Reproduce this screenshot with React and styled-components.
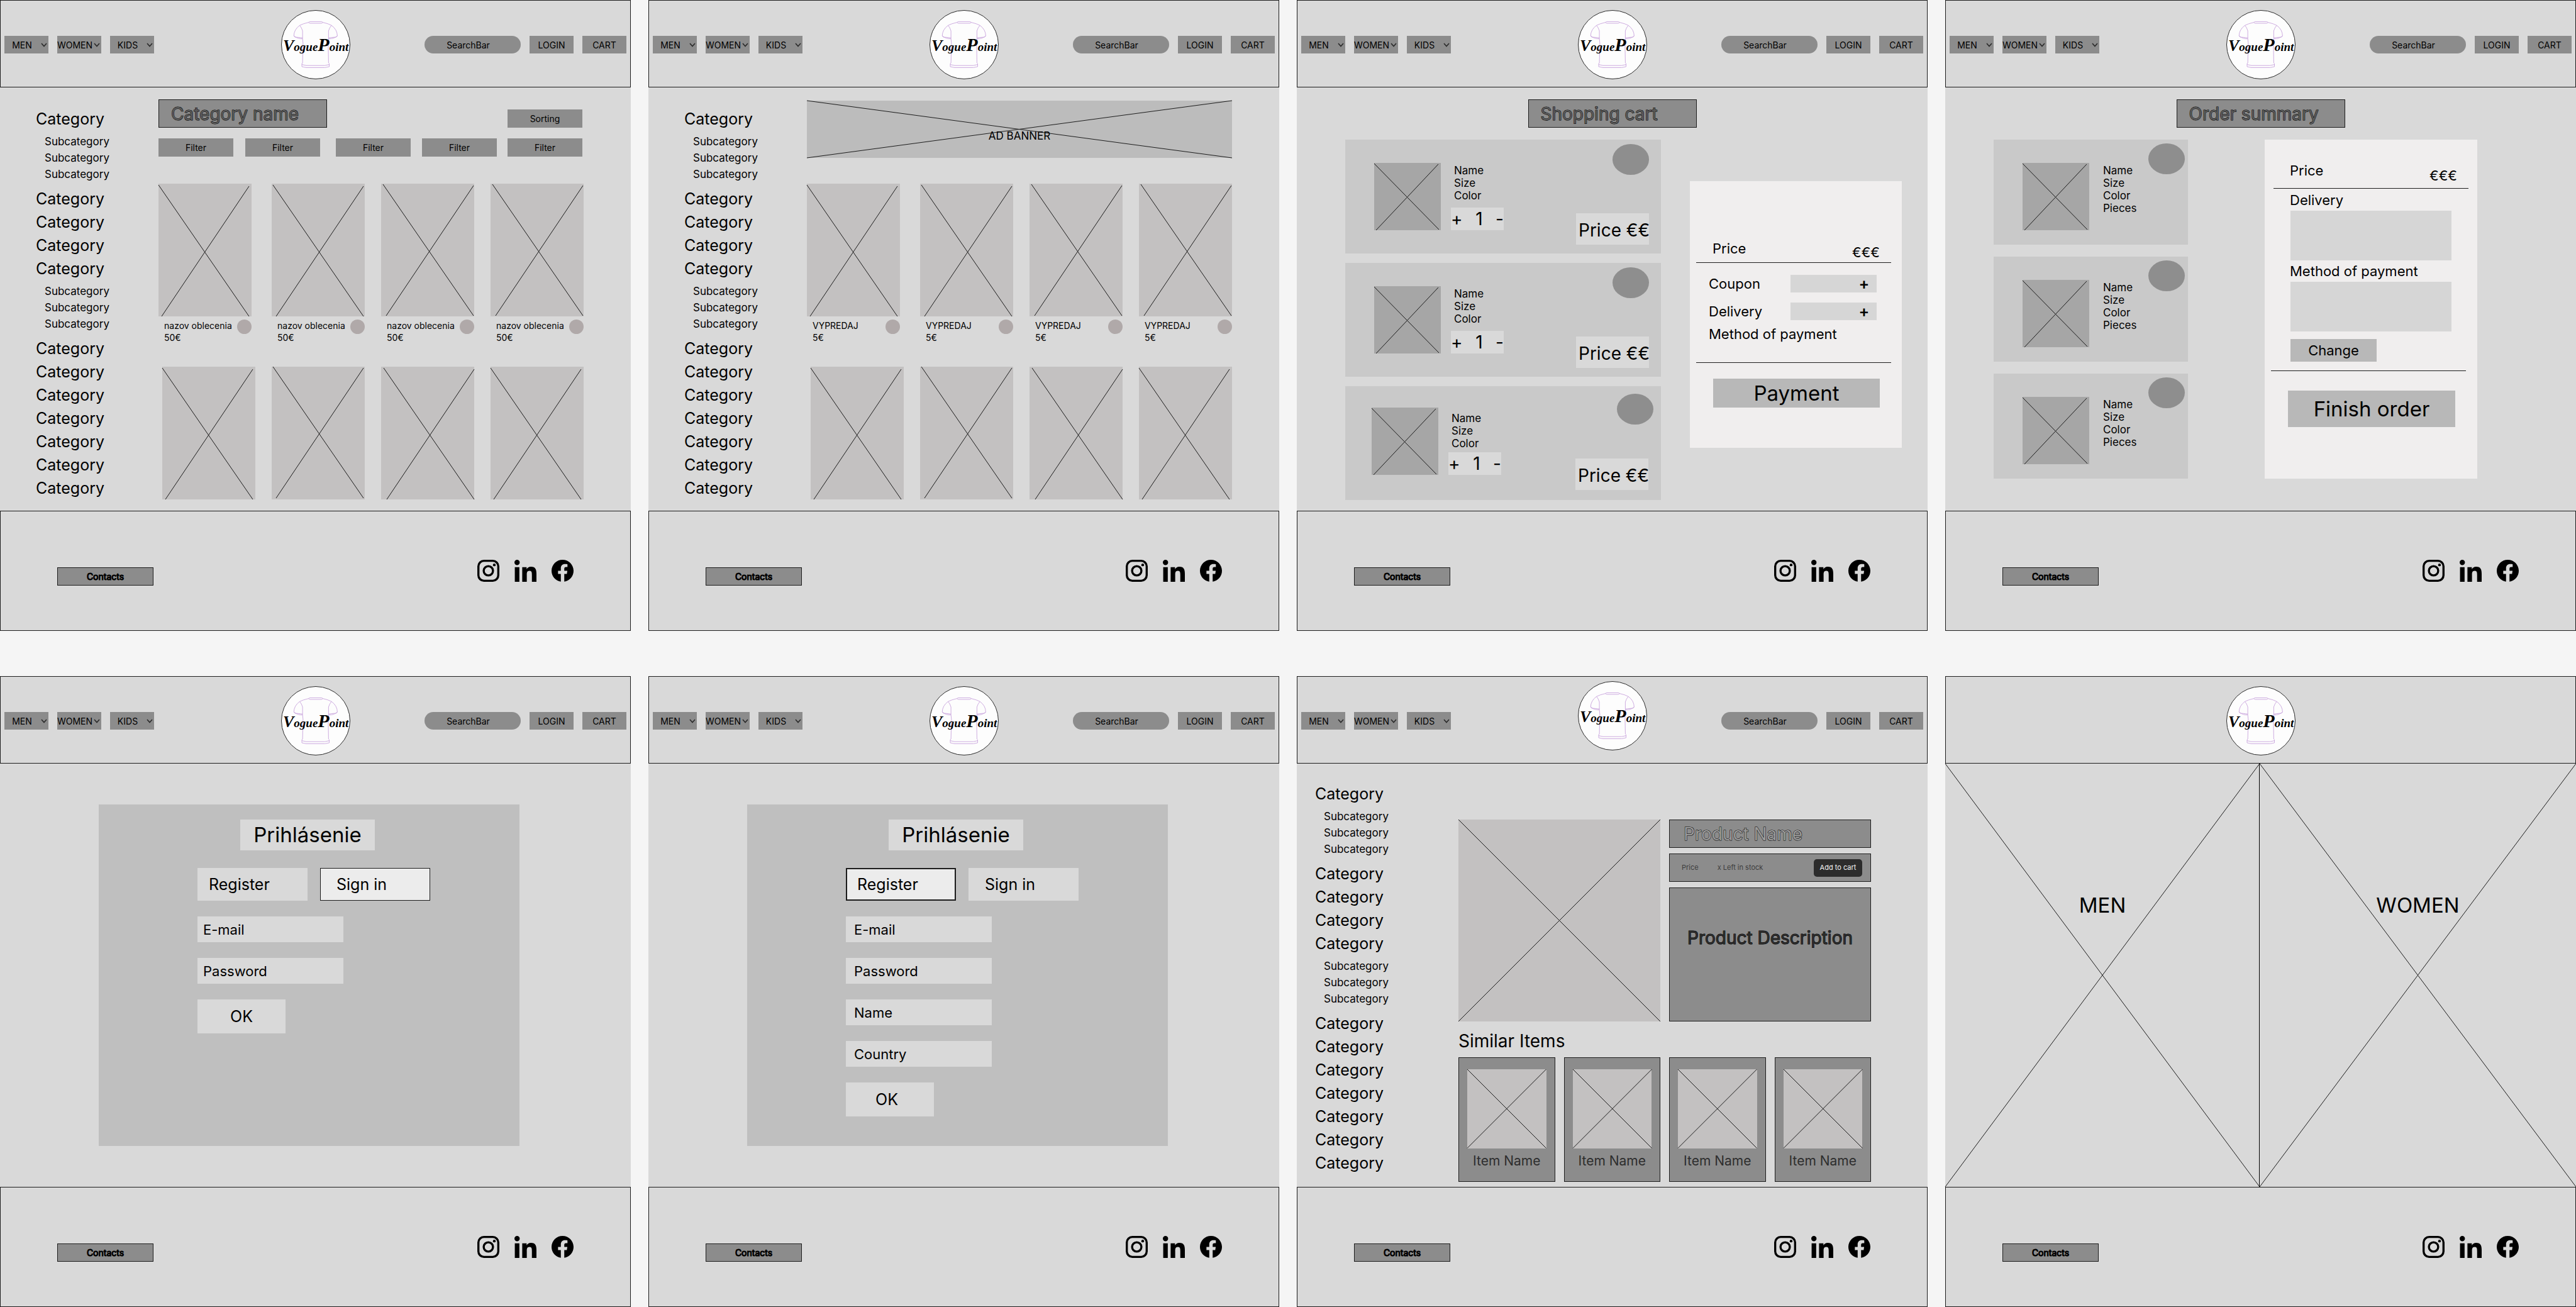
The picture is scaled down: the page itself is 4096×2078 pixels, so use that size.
import React from "react";
import styled, { createGlobalStyle, css } from "styled-components";

const ink = "#000000";
const line = "#1c1c1c";
const canvas = "#d9d9d9";
const control = "#8c8c8c";
const placeholder = "#c3c1c1";

const GlobalStyle = createGlobalStyle`
  *, *::before, *::after { box-sizing: border-box; }
  body {
    margin: 0;
    background: #f5f5f5;
    color: ${ink};
    font-family: Inter, "Liberation Sans", sans-serif;
    font-size: 14px;
    line-height: 19px;
  }
  button, input, textarea {
    margin: 0;
    padding: 0;
    border: 0;
    border-radius: 0;
    background: none;
    color: inherit;
    font: inherit;
  }
  input, textarea { min-width: 0; }
  input::placeholder { color: ${ink}; opacity: 1; }
  h1, h2, h3, p, ul { margin: 0; padding: 0; font-weight: 400; }
  ul { list-style: none; }
  a { color: inherit; text-decoration: none; }
`;

/* ---------- boards ---------- */

const Boards = styled.div`
  display: grid;
  grid-template-columns: repeat(4, minmax(0, 1fr));
  gap: 72px 28px;
  align-items: start;
`;

const Board = styled.article`
  display: flex;
  flex-direction: column;
  aspect-ratio: 1;
  background: ${canvas};
`;

/* ---------- header ---------- */

const HeaderBar = styled.header`
  display: grid;
  grid-template-columns: 1fr 110px 1fr;
  align-items: center;
  padding: ${(p) => (p.$raised ? "7px 6px 20px" : "15px 6px 12px")};
  border: 1px solid ${line};
`;

const NavGroup = styled.nav`
  display: flex;
  gap: 14px;
  justify-content: ${(p) => (p.$end ? "flex-end" : "flex-start")};
  padding-top: ${(p) => (p.$raised ? "16px" : "0")};
`;

const MenuButton = styled.button`
  display: grid;
  grid-template-columns: 56px 14px;
  align-items: center;
  justify-items: center;
  height: 28px;
  background: ${control};
  white-space: nowrap;
`;

const HeaderButton = styled.button`
  width: 70px;
  height: 28px;
  background: ${control};
`;

const SearchInput = styled.input`
  width: 153px;
  height: 28px;
  border-radius: 14px;
  background: ${control};
  text-align: center;
`;

const LogoLink = styled.a`
  grid-column: 2;
  display: block;
  height: 110px;
`;

const LogoSvg = styled.svg`
  display: block;
  width: 110px;
  height: 110px;
  overflow: visible;
`;

const Chevron = () => (
  <svg width="10" height="7" viewBox="0 0 10 7" aria-hidden="true">
    <path d="M1 1 L5 5.5 L9 1" fill="none" stroke="#2a2a2a" strokeWidth="1.6" />
  </svg>
);

const Logo = () => (
  <LogoLink href="#home">
    <LogoSvg viewBox="0 0 110 110" role="img" aria-label="VoguePoint">
      <circle cx="55" cy="55" r="54.5" fill="#fdfdfd" stroke="#2a2a2a" strokeWidth="1" />
      <g fill="none" stroke="#c8a4dc" strokeWidth="0.9">
        <path d="M43.4 19.7 L45.5 18.4 H64.5 L66.6 19.7 L64 21 H46 Z" />
        <path d="M43.4 19.7 Q35 21.5 29.5 24.4 Q20.5 31 20.2 41 Q26 46 34.1 45.7 V33 Q32.5 27.5 29.5 24.4" />
        <path d="M20.2 41 L22 43 Q27 43.2 34.1 44.2" />
        <path d="M66.6 19.7 Q75 21.5 80.2 24.4 Q89.2 31 89.4 41 Q84 46 75.4 45.7 V33 Q77 27.5 80.2 24.4" />
        <path d="M89.4 41 L87.6 43 Q82.6 43.2 75.4 44.2" />
        <path d="M34.1 45.7 Q35.4 52 34.6 62 L34.1 84 M75.4 45.7 Q74.4 52 75 62 L75.4 84" />
        <path d="M34.1 84 L33 85 V90 L40 91.5 H69.5 L76.5 90 V85 L75.4 84" />
        <path d="M33 86.6 L40 88.2 H69.5 L76.5 86.6" />
      </g>
      <text
        x="3"
        y="65"
        fontFamily='"Liberation Serif", "Times New Roman", serif'
        fontStyle="italic"
        fontWeight="700"
        fontSize="19"
      >
        <tspan fontSize="26">V</tspan>
        <tspan>ogue</tspan>
        <tspan fontSize="30">P</tspan>
        <tspan>oint</tspan>
      </text>
    </LogoSvg>
  </LogoLink>
);

const Header = ({ bare = false, raised = false }) => (
  <HeaderBar $raised={raised}>
    {!bare && (
      <NavGroup $raised={raised} aria-label="Departments">
        {["MEN", "WOMEN", "KIDS"].map((name) => (
          <MenuButton key={name} type="button" aria-haspopup="menu">
            {name}
            <Chevron />
          </MenuButton>
        ))}
      </NavGroup>
    )}
    <Logo />
    {!bare && (
      <NavGroup $end $raised={raised} aria-label="Account">
        <SearchInput type="search" placeholder="SearchBar" aria-label="SearchBar" />
        <HeaderButton type="button">LOGIN</HeaderButton>
        <HeaderButton type="button">CART</HeaderButton>
      </NavGroup>
    )}
  </HeaderBar>
);

/* ---------- footer ---------- */

const FooterBar = styled.footer`
  display: flex;
  justify-content: space-between;
  align-items: flex-end;
  padding: 77px 90px 71px;
  border: 1px solid ${line};
`;

const ContactsButton = styled.button`
  width: 153px;
  height: 29px;
  border: 1px solid ${line};
  background: ${control};
  -webkit-text-stroke: 1px ${ink};
`;

const SocialList = styled.ul`
  display: flex;
  gap: 24px;
  padding-bottom: 6px;
`;

const SocialLink = styled.a`
  display: block;
  width: 35px;
  height: 35px;
`;

const Footer = () => (
  <FooterBar>
    <ContactsButton type="button">Contacts</ContactsButton>
    <SocialList>
      <li>
        <SocialLink href="#instagram" aria-label="Instagram">
          <svg width="35" height="35" viewBox="0 0 54 54">
            <rect x="2.6" y="2.6" width="48.8" height="48.8" rx="13.5" fill="none" stroke={ink} strokeWidth="5.2" />
            <circle cx="27" cy="27" r="11.4" fill="none" stroke={ink} strokeWidth="5.2" />
            <circle cx="41.6" cy="12.6" r="3.4" />
          </svg>
        </SocialLink>
      </li>
      <li>
        <SocialLink href="#linkedin" aria-label="LinkedIn">
          <svg width="35" height="35" viewBox="0 0 448 448">
            <path d="M100.28 448H7.4V148.9h92.88zM53.79 108.1C24.09 108.1 0 83.5 0 53.8a53.79 53.79 0 0 1 107.58 0c0 29.7-24.1 54.3-53.79 54.3zM447.9 448h-92.68V302.4c0-34.7-.7-79.2-48.29-79.2-48.29 0-55.69 37.7-55.69 76.7V448h-92.78V148.9h89.08v40.8h1.3c12.4-23.5 42.69-48.3 87.88-48.3 94 0 111.28 61.9 111.28 142.3V448z" />
          </svg>
        </SocialLink>
      </li>
      <li>
        <SocialLink href="#facebook" aria-label="Facebook">
          <svg width="35" height="35" viewBox="8 8 496 496">
            <path d="M504 256C504 119 393 8 256 8S8 119 8 256c0 123.78 90.69 226.38 209.25 245V327.69h-63V256h63v-54.64c0-62.15 37-96.48 93.67-96.48 27.14 0 55.52 4.84 55.52 4.84v61h-31.28c-30.8 0-40.41 19.12-40.41 38.73V256h68.78l-11 71.69h-57.78V501C413.31 482.38 504 379.78 504 256z" />
          </svg>
        </SocialLink>
      </li>
    </SocialList>
  </FooterBar>
);

/* ---------- image placeholders ---------- */

const CrossSvg = styled.svg`
  display: block;
  width: 100%;
  height: 100%;
  overflow: visible;
`;

const Cross = ({ w = 100, h = 100, a = [0, 0, w, h], b = [w, 0, 0, h], dx = 0, dy = 0 }) => (
  <CrossSvg viewBox={`0 0 ${w} ${h}`} preserveAspectRatio="none" aria-hidden="true">
    <g stroke={line} strokeWidth="1" transform={`translate(${dx} ${dy})`}>
      <line x1={a[0]} y1={a[1]} x2={a[2]} y2={a[3]} vectorEffect="non-scaling-stroke" />
      <line x1={b[0]} y1={b[1]} x2={b[2]} y2={b[3]} vectorEffect="non-scaling-stroke" />
    </g>
  </CrossSvg>
);

/* ---------- category sidebar ---------- */

const CategoryNav = styled.nav`
  padding: ${(p) => (p.$tight ? "30px 0 0 29px" : "32px 0 0 57px")};
`;

const CategoryItem = styled.li`
  font-size: 25px;
  line-height: 37px;
`;

const SubList = styled.ul`
  padding: 4px 0 8px 14px;
  font-size: 17px;
  line-height: 26px;
`;

const categoryItems = Array.from({ length: 12 }, (_, i) => ({ id: i, open: i === 0 || i === 4 }));

const Sidebar = ({ tight }) => (
  <CategoryNav $tight={tight} aria-label="Categories">
    <ul>
      {categoryItems.map(({ id, open }) => (
        <CategoryItem key={id}>
          <a href="#category">Category</a>
          {open && (
            <SubList>
              {[0, 1, 2].map((n) => (
                <li key={n}>
                  <a href="#subcategory">Subcategory</a>
                </li>
              ))}
            </SubList>
          )}
        </CategoryItem>
      ))}
    </ul>
  </CategoryNav>
);

/* ---------- catalogue boards ---------- */

const Catalogue = styled.main`
  flex: 1;
  display: grid;
  grid-template-columns: 252px minmax(0, 1fr);
  padding-right: 75px;
`;

const CatalogueContent = styled.section`
  display: flex;
  flex-direction: column;
  padding-top: ${(p) => (p.$banner ? "21px" : "19px")};
`;

const titleBox = css`
  display: flex;
  align-items: center;
  width: 268px;
  height: 45px;
  border: 1px solid ${line};
  background: ${control};
  font-size: 28px;
  line-height: 34px;
  -webkit-text-stroke: 1px ${ink};
  paint-order: stroke fill;
`;

const TitleBox = styled.h1`
  ${titleBox}
  padding-left: 19px;
  color: #5a5a5a;
`;

const TitleRow = styled.div`
  display: flex;
  justify-content: space-between;
  align-items: flex-end;
  padding-right: 2px;
`;

const FilterButton = styled.button`
  width: 119px;
  height: 29px;
  background: ${control};
`;

const FilterRow = styled.div`
  display: grid;
  grid-template-columns: 138fr 144fr 137fr 136fr 119fr;
  padding: 17px 2px 43px 0;
`;

const Banner = styled.div`
  position: relative;
  height: 91px;
  margin-bottom: 41px;
  background: #bcbcbc;
`;

const BannerLabel = styled.p`
  position: absolute;
  inset: 22px 0 0;
  display: flex;
  align-items: center;
  justify-content: center;
  font-size: 17px;
`;

const ProductGrid = styled.ul`
  display: grid;
  grid-template-columns: minmax(0, 1fr) repeat(3, 148px);
  gap: 37px 26px;
`;

const ProductCell = styled.li`
  width: 148px;
  justify-self: ${(p) => (p.$end ? "end" : "start")};
`;

const ProductImage = styled.div`
  height: 211px;
  background: ${placeholder};
`;

const Caption = styled.div`
  display: flex;
  justify-content: space-between;
  align-items: flex-start;
  padding: 5px 0 0 9px;
  white-space: nowrap;
`;

const FavouriteButton = styled.button`
  flex: none;
  width: 23px;
  height: 23px;
  border-radius: 50%;
  background: #b0a9a9;
`;

const crossShifts = [
  [0, 0],
  [2, 0],
  [3, -1],
  [3, -1],
  [0, 0],
  [2, -2],
  [4, 0],
  [0, 0],
];

const Products = ({ name, price }) => (
  <ProductGrid>
    {crossShifts.map(([dx, dy], i) => (
      <ProductCell key={i} $end={i === 4}>
        <ProductImage>
          <Cross w={148} h={211} a={[0, 2, 144, 211]} b={[144, 4, 5, 211]} dx={dx} dy={dy} />
        </ProductImage>
        {i < 4 && (
          <Caption>
            <div>
              <p>{name}</p>
              <p>{price}</p>
            </div>
            <FavouriteButton type="button" aria-label="Add to favourites" />
          </Caption>
        )}
      </ProductCell>
    ))}
  </ProductGrid>
);

const CategoryBoard = () => (
  <Board>
    <Header />
    <Catalogue>
      <Sidebar />
      <CatalogueContent>
        <TitleRow>
          <TitleBox>Category name</TitleBox>
          <FilterButton type="button">Sorting</FilterButton>
        </TitleRow>
        <FilterRow>
          {[0, 1, 2, 3, 4].map((n) => (
            <FilterButton key={n} type="button">
              Filter
            </FilterButton>
          ))}
        </FilterRow>
        <Products name="nazov oblecenia" price="50€" />
      </CatalogueContent>
    </Catalogue>
    <Footer />
  </Board>
);

const SaleBoard = () => (
  <Board>
    <Header />
    <Catalogue>
      <Sidebar />
      <CatalogueContent $banner>
        <Banner>
          <Cross />
          <BannerLabel>AD BANNER</BannerLabel>
        </Banner>
        <Products name="VYPREDAJ" price="5€" />
      </CatalogueContent>
    </Catalogue>
    <Footer />
  </Board>
);

/* ---------- cart and order boards ---------- */

const Checkout = styled.main`
  flex: 1;
  display: flex;
  flex-direction: column;
  align-items: center;
  padding: 19px 0 16px;
`;

const CheckoutColumns = styled.div`
  align-self: stretch;
  display: grid;
  grid-template-columns: ${(p) => p.$columns};
  gap: ${(p) => p.$gap};
  align-items: start;
  padding: 19px 41px 0 77px;
`;

const ItemList = styled.ul`
  display: grid;
  gap: ${(p) => p.$gap};
`;

const CartItem = styled.li`
  display: grid;
  grid-template-columns: 106px 84px 1fr;
  gap: 16px;
  padding: ${(p) => (p.$shifted ? "0 12px 0 42px" : "0 19px 0 46px")};
  background: #c9c9c9;
`;

const Thumb = styled.div`
  height: 107px;
  margin: ${(p) => p.$margin || "37px 0"};
  background: #a6a6a6;
`;

const ItemInfo = styled.div`
  display: flex;
  flex-direction: column;
  justify-content: space-between;
  padding: ${(p) => (p.$shifted ? "41px 0 40px" : "39px 0 37px")};
`;

const Details = styled.div`
  padding-left: 5px;
  font-size: 17px;
  line-height: 20px;
`;

const Stepper = styled.div`
  display: flex;
  justify-content: space-between;
  align-items: center;
  height: 36px;
  background: ${canvas};
  font-size: 28px;
  line-height: 36px;
`;

const ItemSide = styled.div`
  display: flex;
  flex-direction: column;
  justify-content: space-between;
  align-items: flex-end;
  padding: ${(p) => (p.$shifted ? "12px 0 16px" : "7px 0 14px")};
`;

const RemoveButton = styled.button`
  width: 58px;
  height: 49px;
  border-radius: 50%;
  background: #8e8e8e;
`;

const PriceTag = styled.p`
  width: 116px;
  height: 50px;
  margin-right: ${(p) => (p.$shifted ? "8px" : "0")};
  padding: 3px 0 0 4px;
  background: ${canvas};
  font-size: 28px;
  line-height: 48px;
  white-space: nowrap;
`;

const Panel = styled.section`
  display: flex;
  flex-direction: column;
  margin-top: ${(p) => p.$offset || "0"};
  padding: ${(p) => p.$padding};
  background: #f0eeee;
  font-size: 22px;
  line-height: 28px;
`;

const PriceRow = styled.div`
  display: flex;
  justify-content: space-between;
  align-items: flex-end;
  margin: ${(p) => p.$margin};
  padding: 0 18px ${(p) => p.$bottom} 26px;
  border-bottom: 1px solid ${line};
`;

const PriceLabel = styled.p`
  padding-bottom: ${(p) => p.$bottom};
`;

const Rule = styled.hr`
  width: auto;
  height: 1px;
  margin: ${(p) => p.$margin};
  border: 0;
  background: ${line};
`;

const ExpandRow = styled.div`
  display: grid;
  grid-template-columns: 130px 137px;
  align-items: center;
  margin: 0 0 16px 30px;
`;

const ExpandField = styled.div`
  display: flex;
  height: 28px;
  padding-right: 10px;
  background: #d6d6d6;

  input { flex: 1; }
  button { width: 20px; font-size: 25px; font-weight: 600; }
`;

const PanelText = styled.p`
  padding-left: 30px;
  margin-top: -8px;
`;

const WideButton = styled.button`
  height: ${(p) => p.$height};
  margin: 0 35px 0 37px;
  background: #b8b8b8;
  font-size: 33px;
  line-height: 40px;
`;

const FieldLabel = styled.label`
  padding-left: 40px;
  margin: ${(p) => p.$margin};
`;

const FieldArea = styled.textarea`
  display: block;
  height: 79px;
  margin: 0 41px 0 41px;
  background: #d6d6d6;
  resize: none;
`;

const ChangeButton = styled.button`
  align-self: flex-start;
  width: 137px;
  height: 36px;
  margin: 12px 0 0 41px;
  background: #b8b8b8;
`;

const ThumbCross = () => <Cross w={106} h={107} a={[0, 1, 103, 106]} b={[102, 2, 3, 107]} />;

const CartBoard = () => (
  <Board>
    <Header />
    <Checkout>
      <TitleBox>Shopping cart</TitleBox>
      <CheckoutColumns $columns="minmax(0, 502fr) minmax(0, 337fr)" $gap="46px">
        <ItemList $gap="15px">
          {[false, false, true].map((shifted, i) => (
            <CartItem key={i} $shifted={shifted}>
              <Thumb $margin={shifted ? "34px 0 40px" : "37px 0"}>
                <ThumbCross />
              </Thumb>
              <ItemInfo $shifted={shifted}>
                <Details>
                  <p>Name</p>
                  <p>Size</p>
                  <p>Color</p>
                </Details>
                <Stepper>
                  <button type="button">+</button>
                  <span>1</span>
                  <button type="button">-</button>
                </Stepper>
              </ItemInfo>
              <ItemSide $shifted={shifted}>
                <RemoveButton type="button" aria-label="Remove item" />
                <PriceTag $shifted={shifted}>Price €€</PriceTag>
              </ItemSide>
            </CartItem>
          ))}
        </ItemList>
        <Panel $offset="66px" $padding="93px 0 64px">
          <PriceRow $margin="0 17px 19px 10px" $bottom="2px">
            <PriceLabel $bottom="6px">Price</PriceLabel>
            <p>€€€</p>
          </PriceRow>
          {["Coupon", "Delivery"].map((name) => (
            <ExpandRow key={name}>
              <label htmlFor={`cart-${name}`}>{name}</label>
              <ExpandField>
                <input id={`cart-${name}`} type="text" />
                <button type="button">+</button>
              </ExpandField>
            </ExpandRow>
          ))}
          <PanelText>Method of payment</PanelText>
          <Rule $margin="31px 17px 25px 10px" />
          <WideButton type="button" $height="46px">
            Payment
          </WideButton>
        </Panel>
      </CheckoutColumns>
    </Checkout>
    <Footer />
  </Board>
);

const OrderItem = styled.li`
  display: grid;
  grid-template-columns: 106px 1fr 58px;
  align-items: start;
  padding: 0 5px 0 46px;
  background: #c9c9c9;
`;

const OrderDetails = styled(Details)`
  padding: 39px 0 0 22px;
`;

const OrderRemove = styled(RemoveButton)`
  margin-top: 6px;
`;

const OrderColumns = styled(CheckoutColumns)`
  padding-right: 157px;
`;

const OrderBoard = () => (
  <Board>
    <Header />
    <Checkout>
      <TitleBox>Order summary</TitleBox>
      <OrderColumns $columns="minmax(0, 309fr) minmax(0, 338fr)" $gap="122px">
        <ItemList $gap="19px">
          {[0, 1, 2].map((n) => (
            <OrderItem key={n}>
              <Thumb $margin="37px 0 23px">
                <ThumbCross />
              </Thumb>
              <OrderDetails>
                <p>Name</p>
                <p>Size</p>
                <p>Color</p>
                <p>Pieces</p>
              </OrderDetails>
              <OrderRemove type="button" aria-label="Remove item" />
            </OrderItem>
          ))}
        </ItemList>
        <Panel $padding="35px 0 82px">
          <PriceRow $margin="0 14px" $bottom="6px">
            <PriceLabel $bottom="8px">Price</PriceLabel>
            <p>€€€</p>
          </PriceRow>
          <FieldLabel htmlFor="order-delivery" $margin="4px 0 3px">
            Delivery
          </FieldLabel>
          <FieldArea id="order-delivery" />
          <FieldLabel htmlFor="order-payment" $margin="3px 0">
            Method of payment
          </FieldLabel>
          <FieldArea id="order-payment" />
          <ChangeButton type="button">Change</ChangeButton>
          <Rule $margin="14px 18px 31px 10px" />
          <WideButton type="button" $height="58px">
            Finish order
          </WideButton>
        </Panel>
      </OrderColumns>
    </Checkout>
    <Footer />
  </Board>
);

/* ---------- account boards ---------- */

const Account = styled.main`
  flex: 1;
  display: flex;
  padding: 65px 177px 65px 157px;
`;

const AccountPanel = styled.section`
  flex: 1;
  display: flex;
  flex-direction: column;
  padding: 24px 0 0 157px;
  background: #bfbfbf;
`;

const AccountTitle = styled.h1`
  width: 214px;
  margin: 0 0 28px 68px;
  background: ${canvas};
  font-size: 33px;
  line-height: 49px;
  text-align: center;
`;

const Tabs = styled.div`
  display: flex;
  gap: 20px;
  margin-bottom: 25px;
`;

const Tab = styled.button`
  width: 175px;
  height: 52px;
  padding-left: ${(p) => p.$indent};
  background: ${(p) => (p.$outline ? "#ececec" : canvas)};
  box-shadow: inset 0 0 0 ${(p) => p.$outline || "0"} ${line};
  font-size: 25px;
  line-height: 30px;
  text-align: left;
`;

const AccountForm = styled.form`
  display: flex;
  flex-direction: column;
  align-items: flex-start;
  gap: 25px;
`;

const AccountInput = styled.input`
  width: 232px;
  height: 41px;
  padding-left: ${(p) => p.$indent};
  background: ${canvas};
  font-size: 22px;
  line-height: 28px;
`;

const SubmitButton = styled.button`
  width: 140px;
  height: 54px;
  padding-right: ${(p) => p.$shift};
  background: ${canvas};
  font-size: 25px;
  line-height: 30px;
`;

const AccountBoard = ({ mode, fields }) => {
  const registering = mode === "register";
  return (
    <Board>
      <Header />
      <Account>
        <AccountPanel>
          <AccountTitle>Prihlásenie</AccountTitle>
          <Tabs>
            <Tab type="button" $indent="18px" $outline={registering ? "2px" : undefined}>
              Register
            </Tab>
            <Tab type="button" $indent="26px" $outline={registering ? undefined : "1px"}>
              Sign in
            </Tab>
          </Tabs>
          <AccountForm>
            {fields.map((name) => (
              <AccountInput
                key={name}
                type={name === "Password" ? "password" : "text"}
                placeholder={name}
                aria-label={name}
                $indent={registering ? "13px" : "9px"}
              />
            ))}
            <SubmitButton type="button" $shift={registering ? "10px" : "0"}>
              OK
            </SubmitButton>
          </AccountForm>
        </AccountPanel>
      </Account>
      <Footer />
    </Board>
  );
};

/* ---------- product board ---------- */

const ProductMain = styled.main`
  flex: 1;
  display: grid;
  grid-template-columns: 257px minmax(0, 1fr);
  padding-right: 90px;
`;

const ProductContent = styled.section`
  padding-top: 89px;
`;

const ProductTop = styled.div`
  display: grid;
  grid-template-columns: repeat(2, minmax(0, 1fr));
  gap: 14px;
`;

const ProductPhoto = styled.div`
  aspect-ratio: 1;
  background: ${placeholder};
`;

const ProductFacts = styled.div`
  display: flex;
  flex-direction: column;
  gap: 9px;
`;

const ProductName = styled.h1`
  ${titleBox}
  width: auto;
  padding-left: 22px;
  color: #9b9b9b;
`;

const StockBar = styled.div`
  display: flex;
  align-items: center;
  gap: 30px;
  height: 45px;
  padding: 0 13px 0 19px;
  border: 1px solid ${line};
  background: ${control};
  color: #3d3d3d;
  font-size: 11px;
`;

const AddButton = styled.button`
  width: 77px;
  height: 28px;
  margin-left: auto;
  border-radius: 5px;
  background: #2c2c2c;
  color: #f5f5f5;
`;

const Description = styled.div`
  flex: 1;
  padding-top: 62px;
  border: 1px solid ${line};
  background: ${control};
  color: #2c2c2c;
  font-size: 28px;
  line-height: 34px;
  text-align: center;
  -webkit-text-stroke: 1px ${ink};
  paint-order: stroke fill;
`;

const SimilarTitle = styled.h2`
  margin: 14px 0 9px;
  font-size: 28px;
  line-height: 34px;
`;

const SimilarGrid = styled.ul`
  display: grid;
  grid-template-columns: repeat(4, minmax(0, 1fr));
  gap: 14px;
`;

const SimilarCard = styled.li`
  padding: 18px 13px 19px;
  border: 1px solid ${line};
  background: ${control};
  color: #2e2e2e;
  font-size: 21px;
  line-height: 26px;
  text-align: center;
`;

const SimilarImage = styled.div`
  aspect-ratio: 1;
  margin-bottom: 7px;
  background: ${placeholder};
`;

const ProductBoard = () => (
  <Board>
    <Header raised />
    <ProductMain>
      <Sidebar tight />
      <ProductContent>
        <ProductTop>
          <ProductPhoto>
            <Cross />
          </ProductPhoto>
          <ProductFacts>
            <ProductName>Product Name</ProductName>
            <StockBar>
              <span>Price</span>
              <span>x Left in stock</span>
              <AddButton type="button">Add to cart</AddButton>
            </StockBar>
            <Description>Product Description</Description>
          </ProductFacts>
        </ProductTop>
        <SimilarTitle>Similar Items</SimilarTitle>
        <SimilarGrid>
          {[0, 1, 2, 3].map((n) => (
            <SimilarCard key={n}>
              <SimilarImage>
                <Cross />
              </SimilarImage>
              Item Name
            </SimilarCard>
          ))}
        </SimilarGrid>
      </ProductContent>
    </ProductMain>
    <Footer />
  </Board>
);

/* ---------- landing board ---------- */

const Landing = styled.main`
  flex: 1;
  display: grid;
  grid-template-columns: minmax(0, 500fr) minmax(0, 503fr);
`;

const LandingLink = styled.a`
  position: relative;
  padding-top: 205px;
  font-size: 33px;
  line-height: 40px;
  text-align: center;

  & + & { box-shadow: -1px 0 0 ${ink}; }

  svg {
    position: absolute;
    inset: 0;
  }
`;

const LandingBoard = () => (
  <Board>
    <Header bare />
    <Landing>
      {["MEN", "WOMEN"].map((name) => (
        <LandingLink key={name} href="#shop">
          <Cross />
          {name}
        </LandingLink>
      ))}
    </Landing>
    <Footer />
  </Board>
);

export default function App() {
  return (
    <>
      <GlobalStyle />
      <Boards>
        <CategoryBoard />
        <SaleBoard />
        <CartBoard />
        <OrderBoard />
        <AccountBoard mode="signin" fields={["E-mail", "Password"]} />
        <AccountBoard mode="register" fields={["E-mail", "Password", "Name", "Country"]} />
        <ProductBoard />
        <LandingBoard />
      </Boards>
    </>
  );
}
